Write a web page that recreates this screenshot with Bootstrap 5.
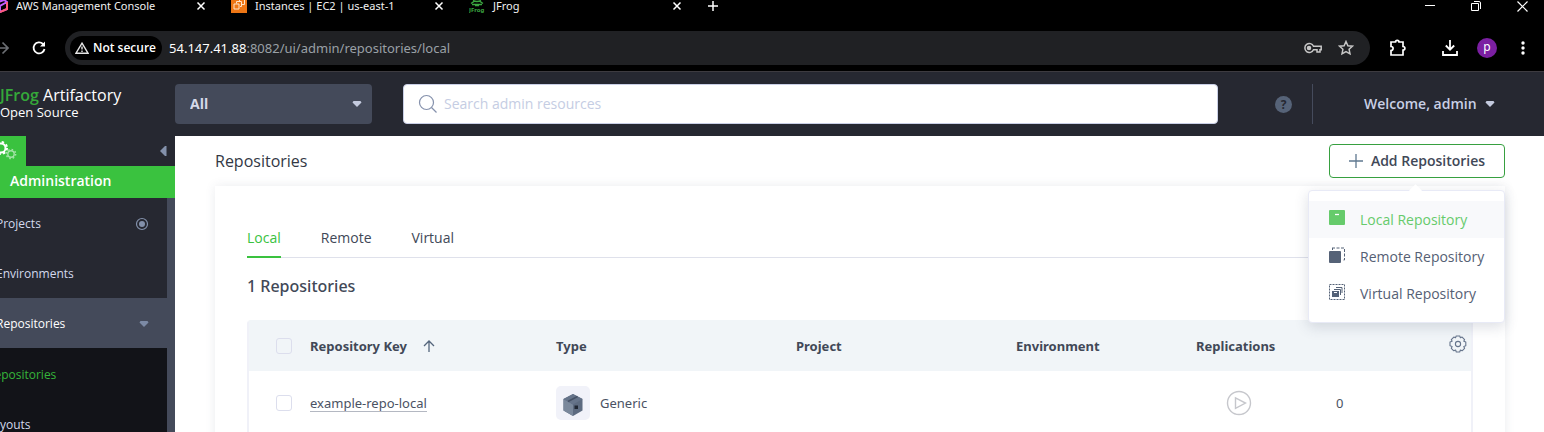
<!DOCTYPE html>
<html lang="en">
<head>
<meta charset="utf-8">
<meta name="viewport" content="width=device-width, initial-scale=1">
<title>JFrog</title>
<link href="https://cdn.jsdelivr.net/npm/bootstrap@5.3.0/dist/css/bootstrap.min.css" rel="stylesheet">
<style>
:root { --ink: #414857; --navy: #262831; --slate: #444a5a; --leaf: #3ac23f; }
body { font-family: "Open Sans", "Noto Sans", sans-serif; font-size: 14px; line-height: 20px; color: var(--ink); background: #fff; height: 100vh; overflow: hidden; }
button { background: none; border: 0; padding: 0; color: inherit; }
svg { display: block; flex: none; }
a { color: inherit; text-decoration: none; }

/* browser chrome */
.chrome { background: #000; color: #f0f0f0; font-family: "Noto Sans", sans-serif; font-size: 11px; border-bottom: 1px solid #3d3b40; }
.strip { height: 31px; padding-bottom: 19px; }
.strip-tab { width: 238px; padding-right: 25px; gap: 8px; }
.strip-tab.first { width: 239px; margin-left: -8px; }
.strip-title { line-height: 16px; }
.window-keys { gap: 36px; padding-right: 16px; }
.tools { padding-bottom: 6px; }
.reload { margin: 0 19px 0 23px; }
.omnibox { background: #202124; border-radius: 17px; height: 34px; padding: 0 16px 0 5px; gap: 7px; font-size: 13px; color: #9aa0a6; }
.omnibox b { color: #fff; font-weight: 400; }
.unsafe { background: #000; color: #fff; border-radius: 12px; height: 24px; padding: 0 6px 0 5px; gap: 4px; font-family: "Open Sans", sans-serif; font-size: 12px; font-weight: 600; }
.extras { gap: 34px; padding: 0 19px 0 19px; }
.extras .me { gap: 24px; margin-left: -16px; }
.avatar { width: 20px; height: 20px; border-radius: 50%; background: #7b1fa2; color: #fff; font-size: 12px; line-height: 18px; }

/* application header */
.app-head { background: var(--navy); height: 64px; color: #c9d0e6; }
.brand { width: 175px; color: #fff; padding-bottom: 4px; }
.brand-name { font-size: 16px; line-height: 20px; }
.brand-name b { color: #35a83a; font-weight: 600; }
.brand-sub { font-size: 13px; line-height: 14px; }
.scope { width: 197px; }
.scope select { appearance: none; width: 100%; height: 40px; border: 0; border-radius: 4px; background: var(--slate); color: #d5d9e8; font-size: 14px; font-weight: 700; padding: 0 15px; }
.over-right { position: absolute; right: 10px; top: 17px; pointer-events: none; }
.finder { height: 40px; background: #fff; border: 1px solid #c9cfe6; border-radius: 4px; padding: 0 14px; margin-left: 31px; }
.finder input { border: 0; outline: 0; background: none; font-size: 14px; color: var(--ink); }
.finder input::placeholder { color: #c5cde3; opacity: 1; }
.account { width: 326px; }
.help { width: 17px; height: 17px; border-radius: 50%; background: #566378; color: var(--navy); font-size: 12px; font-weight: 700; line-height: 17px; margin-right: 20px; }
.account-name { height: 40px; border-left: 1px solid #454b5c; padding-left: 51px; width: 232px; font-weight: 600; }

/* sidebar */
.side { width: 175px; background: var(--navy); color: #d3d9ec; font-size: 12px; }
.side-top { height: 30px; }
.side-chip { width: 26px; height: 30px; background: var(--leaf); }
.side-title { height: 32px; line-height: 30px; background: var(--leaf); color: #fff; font-size: 14px; font-weight: 600; padding-left: 10px; }
.side-list { border-right: 8px solid var(--slate); }
.side-item { height: 50px; padding: 2px 18px 0 0; margin-left: -4px; }
.side-item.opened { background: var(--slate); color: #fff; margin-right: -1px; padding-right: 19px; }
.side-sub { background: #121318; padding-top: 1px; }
.side-sub .side-item { margin-left: -13px; }
.side-sub .chosen { color: #35b53a; }

/* page */
.page { padding: 0 39px 0 40px; min-width: 0; }
.page-bar { height: 50px; }
.page-title { font-size: 16px; line-height: 24px; font-weight: 400; margin: 0; color: #333845; }
.add-btn { height: 34px; width: 176px; border: 1px solid #37a040; border-radius: 4px; background: #fff; font-weight: 600; color: var(--ink); }
.add-menu { position: absolute; right: 0; top: 46px; width: 197px; border: 1px solid #e8eaf6; border-radius: 4px; background: #fff; padding: 10px 0; box-shadow: 0 4px 14px rgba(60,70,100,.18); z-index: 5; }
.add-menu::before { content: ""; position: absolute; left: 102px; top: -5px; width: 9px; height: 9px; background: #fff; transform: rotate(45deg); }
.add-item { display: flex; align-items: center; height: 37px; padding-left: 20px; gap: 14px; color: #556074; }
.add-item.current { background: #f8f9fb; color: #66cb6b; }
.panel { box-shadow: 0 0 10px rgba(60,70,100,.1); padding: 40px 32px 0; min-height: 260px; }
.tab-row { border-bottom: 1px solid #dfe1eb; gap: 40px; }
.tab-row a { padding: 2px 0 8px; border-bottom: 2px solid transparent; margin-bottom: -1px; }
.tab-row a.active { color: var(--leaf); border-color: var(--leaf); }
.count { font: 500 16px/24px "Noto Sans", sans-serif; margin: 16px 0 22px; }
.repos { width: 100%; table-layout: fixed; border: 2px solid #f0f1f8; border-top-color: #f1f5f8; border-collapse: separate; border-spacing: 0; border-radius: 4px 4px 0 0; font-family: "Noto Sans", sans-serif; font-size: 13px; }
.repos thead { background: #f1f5f8; }
.repos th, .repos td { padding: 0; vertical-align: middle; }
.repos th { height: 49px; font-weight: 700; padding-bottom: 2px; }
.repos td { height: 64px; color: #4a5263; }
.col-tick { width: 61px; }
.col-key { width: 246px; }
.col-kind { width: 240px; }
.col-project { width: 220px; }
.col-env { width: 180px; }
.col-run { width: 140px; }
.tick { appearance: none; display: block; width: 16px; height: 16px; border: 1px solid #dcdeed; border-radius: 3px; margin-left: 27px; }
.repo-link { border-bottom: 1px solid #b4b8c2; line-height: 16px; display: inline-block; }
.kind { width: 34px; height: 34px; border-radius: 5px; background: #f1f2f9; margin-right: 10px; }
.run { width: 86px; }
</style>
</head>
<body class="d-flex flex-column">
<header class="chrome flex-shrink-0">
  <div class="strip d-flex align-items-center">
    <div class="strip-tab first d-flex align-items-center">
      <svg width="16" height="16" viewBox="0 0 16 16" fill="none" stroke-width="2"><path d="M3 5l9-3 3 2v7l-7 3-5-3zM8 8v6M8 8l7-4" stroke="#c05cff"/><path d="M8 14l7-3V4" stroke="#ff5a7a"/></svg>
      <span class="strip-title flex-fill">AWS Management Console</span>
      <button aria-label="Close AWS tab"><svg width="10" height="10" viewBox="0 0 10 10" stroke="#fff" stroke-width="1.500"><path d="M1.500 1.500l7 7M8.500 1.500l-7 7"/></svg></button>
    </div>
    <div class="strip-tab d-flex align-items-center">
      <svg width="16" height="16" viewBox="0 0 16 16"><path fill="#ed7615" d="M0 0h16v15H0z"/><path d="M3 6h5v5H3zM5.500 5.500V3.500h5v5H9M8.500 3.500v-2h5v5h-2.500" fill="none" stroke="#ffe3c8"/></svg>
      <span class="strip-title flex-fill">Instances | EC2 | us-east-1</span>
      <button aria-label="Close EC2 tab"><svg width="10" height="10" viewBox="0 0 10 10" stroke="#fff" stroke-width="1.500"><path d="M1.500 1.500l7 7M8.500 1.500l-7 7"/></svg></button>
    </div>
    <div class="strip-tab d-flex align-items-center">
      <svg width="16" height="16" viewBox="0 0 16 16" fill="none" stroke="#3ba640"><path d="M4 2.500q4 2 8 0M2 5.500l3-2M14 5.500l-3-2M3 6.500h10M6 7.500h4" stroke-width="1.500"/><text x="0" y="14" font-size="6" font-weight="700" font-family="Noto Sans, sans-serif" fill="#3ba640" stroke="none">JFrog</text></svg>
      <span class="strip-title flex-fill">JFrog</span>
      <button aria-label="Close JFrog tab"><svg width="10" height="10" viewBox="0 0 10 10" stroke="#fff" stroke-width="1.500"><path d="M1.500 1.500l7 7M8.500 1.500l-7 7"/></svg></button>
    </div>
    <button aria-label="New tab"><svg width="12" height="12" viewBox="0 0 12 12" stroke="#fff" stroke-width="1.500"><path d="M6 1v10M1 6h10"/></svg></button>
    <div class="window-keys ms-auto d-flex align-items-center">
      <button aria-label="Minimize"><svg width="10" height="10" viewBox="0 0 10 10" stroke="#fff"><path d="M0 4.500h10"/></svg></button>
      <button aria-label="Restore"><svg width="10" height="10" viewBox="0 0 10 10" stroke="#fff" fill="none"><path d="M.5 2.500h7v7h-7zM3 .5h5q1.500 0 1.500 1.500v6"/></svg></button>
      <button aria-label="Close window"><svg width="11" height="11" viewBox="0 0 11 11" stroke="#fff" stroke-width="1.200"><path d="M.5.5l10 10M10.500.5l-10 10"/></svg></button>
    </div>
  </div>
  <div class="tools d-flex align-items-center">
    <button aria-label="Forward"><svg width="9" height="14" viewBox="0 0 9 14" fill="none" stroke="#6b6e73" stroke-width="1.700"><path d="M0 7h8M2.500 1.500L8 7l-5.500 5.500"/></svg></button>
    <button class="reload" aria-label="Reload"><svg width="14" height="14" viewBox="0 0 14 14" fill="none" stroke="#fff" stroke-width="1.800"><path d="M12.500 8A5.500 5.500 0 1 1 11 3l1 1"/><path d="M13 .5v5H8z" fill="#fff" stroke="none"/></svg></button>
    <div class="omnibox d-flex align-items-center flex-fill">
      <span class="unsafe d-flex align-items-center"><svg width="14" height="12" viewBox="0 0 14 12" fill="none" stroke="#e6e6e6" stroke-width="1.400"><path d="M7 1.200L13 11.200H1zM7 4.500v3M7 8.500v1.400"/></svg>Not secure</span>
      <span><b>54.147.41.88</b>:8082/ui/admin/repositories/local</span>
      <span class="ms-auto d-flex align-items-center gap-3">
        <svg width="18" height="12" viewBox="0 0 18 12" fill="none" stroke="#c7c7c7" stroke-width="1.500"><path d="M9.500 4.200A4.500 4.500 0 1 0 9.500 7.800H13V10H16V7.800H17.200V4.200z"/><circle cx="5" cy="6" r="1.500" fill="#c7c7c7"/></svg>
        <svg width="16" height="16" viewBox="0 0 16 16" fill="none" stroke="#c7c7c7" stroke-width="1.500"><path d="M8 1.500l1.900 4.200 4.600.5-3.400 3.100.9 4.600-4-2.300-4 2.300.9-4.600L1.500 6.200l4.600-.5z"/></svg>
      </span>
    </div>
    <div class="extras d-flex align-items-center">
      <button aria-label="Extensions"><svg width="18" height="18" viewBox="0 0 18 18" fill="none" stroke="#fff" stroke-width="1.700"><path d="M2 3h4.500C6.500.8 10 .8 10 3h4v4.500c2.500 0 2.500 3.500 0 3.500v5H2v-4.500c2.800 0 2.800-4 0-4z"/></svg></button>
      <button aria-label="Downloads"><svg width="18" height="18" viewBox="0 0 18 18" fill="none" stroke="#fff" stroke-width="1.800"><path d="M9 1v9.500M4.800 6.500L9 10.700l4.200-4.200M2 12v4h14v-4"/></svg></button>
      <div class="me d-flex align-items-center">
        <span class="avatar text-center">p</span>
        <button aria-label="Menu"><svg width="4" height="14" viewBox="0 0 4 14" fill="#fff"><circle cx="2" cy="2" r="1.700"/><circle cx="2" cy="7" r="1.700"/><circle cx="2" cy="12" r="1.700"/></svg></button>
      </div>
    </div>
  </div>
</header>

<header class="app-head d-flex align-items-center flex-shrink-0">
  <div class="brand">
    <div class="brand-name"><b>JFrog</b> Artifactory</div>
    <div class="brand-sub">Open Source</div>
  </div>
  <div class="scope position-relative">
    <select aria-label="Scope"><option>All</option></select>
    <svg class="over-right" width="10" height="6" viewBox="0 0 10 6" fill="#c4cade"><path d="M1.500 0h7l1 1.500L5 6 .5 1.500z"/></svg>
  </div>
  <div class="finder d-flex align-items-center flex-fill">
    <svg width="20" height="20" viewBox="0 0 20 20" fill="none" stroke="#8591ac" stroke-width="1.200"><circle cx="8.500" cy="8.500" r="7"/><path d="M13.500 13.500l5 5"/></svg>
    <input class="flex-fill ms-1" type="text" placeholder="Search admin resources" aria-label="Search admin resources">
  </div>
  <div class="account d-flex align-items-center justify-content-end">
    <button class="help text-center" aria-label="Help">?</button>
    <button class="account-name d-flex align-items-center">Welcome, admin<svg class="ms-2" width="10" height="6" viewBox="0 0 10 6" fill="#c4cade"><path d="M1.500 0h7l1 1.500L5 6 .5 1.500z"/></svg></button>
  </div>
</header>

<div class="d-flex flex-fill">
  <nav class="side d-flex flex-column flex-shrink-0">
    <div class="side-top d-flex justify-content-between align-items-center">
      <div class="side-chip"><svg width="26" height="30" viewBox="0 0 26 30" fill="none"><circle cx="1" cy="12" r="4.500" stroke="#fff" stroke-width="2"/><circle cx="1" cy="12" r="6" stroke="#fff" stroke-width="2" stroke-dasharray="2.400 2.310"/><g stroke="#a5e3a8"><circle cx="11" cy="18" r="3.200" stroke-width="1.400"/><circle cx="11" cy="18" r="4.600" stroke-width="1.500" stroke-dasharray="1.600 2.013"/></g></svg></div>
      <button class="me-2" aria-label="Collapse"><svg width="7" height="10" viewBox="0 0 7 10" fill="#8391ab"><path d="M0 5l5-5h1.500v10H5z"/></svg></button>
    </div>
    <div class="side-title">Administration</div>
    <div class="side-list flex-fill">
      <a href="#" class="side-item d-flex align-items-center justify-content-between">Projects<svg width="14" height="14" viewBox="0 0 14 14" fill="none" stroke="#8391ab"><circle cx="7" cy="7" r="5.500" stroke-width="1.200"/><circle cx="7" cy="7" r="3" fill="#8391ab" stroke="none"/></svg></a>
      <a href="#" class="side-item d-flex align-items-center">Environments</a>
      <a href="#" class="side-item opened d-flex align-items-center justify-content-between">Repositories<svg width="10" height="6" viewBox="0 0 10 6" fill="#7c8aa5"><path d="M1.500 0h7l1 1.500L5 6 .5 1.500z"/></svg></a>
      <div class="side-sub">
        <a href="#" class="side-item chosen d-flex align-items-center">Repositories</a>
        <a href="#" class="side-item d-flex align-items-center">Layouts</a>
      </div>
    </div>
  </nav>

  <main class="page flex-fill">
    <div class="page-bar d-flex align-items-center justify-content-between">
      <h1 class="page-title">Repositories</h1>
      <div class="position-relative">
        <button class="add-btn d-flex align-items-center justify-content-center gap-2" aria-expanded="true"><svg width="14" height="14" viewBox="0 0 14 14" stroke="#5f7890" stroke-width="1.300"><path d="M7 0v14M0 7h14"/></svg>Add Repositories</button>
        <div class="add-menu">
          <a href="#" class="add-item current"><svg width="17" height="20" viewBox="0 0 17 20"><rect x="0" y="0" width="16" height="15" rx="1" fill="#66cb6b"/><path d="M6 4.500h4" stroke="#fff" stroke-width="1.300"/></svg>Local Repository</a>
          <a href="#" class="add-item"><svg width="17" height="20" viewBox="0 0 17 20"><rect x="0" y="4" width="12" height="12" rx="1" fill="#556277"/><path d="M3 1h12.500V13H13M3.500 1V3" fill="none" stroke="#556277" stroke-dasharray="3 1.500"/></svg>Remote Repository</a>
          <a href="#" class="add-item"><svg width="17" height="20" viewBox="0 0 17 20" fill="none" stroke="#556277"><path d="M.5 .5h15v15H.5z" stroke-dasharray="2 1"/><path d="M3 7h7v6H3z" fill="#556277" stroke="none"/><path d="M5 5.500h6.500V11M7 3.500h6V9"/><path d="M5 8.500h3" stroke="#fff"/></svg>Virtual Repository</a>
        </div>
      </div>
    </div>
    <section class="panel">
      <nav class="tab-row d-flex">
        <a href="#" class="active">Local</a><a href="#">Remote</a><a href="#">Virtual</a>
      </nav>
      <h2 class="count">1 Repositories</h2>
      <table class="repos">
        <colgroup><col class="col-tick"><col class="col-key"><col class="col-kind"><col class="col-project"><col class="col-env"><col class="col-run"><col></colgroup>
        <thead><tr>
          <th><input type="checkbox" class="tick" aria-label="Select all"></th>
          <th><span class="d-flex align-items-center gap-3">Repository Key<svg width="12" height="12" viewBox="0 0 12 12" fill="none" stroke="#54657c" stroke-width="1.300"><path d="M6 12V1M1 6l5-5 5 5"/></svg></span></th>
          <th>Type</th><th>Project</th><th>Environment</th><th>Replications</th>
          <th><button class="d-block ms-auto me-1 mb-1" aria-label="Columns"><svg width="18" height="18" viewBox="0 0 18 18" fill="none" stroke="#66758c" stroke-width="1.100"><path d="M7.200 1h3.600l.6 1.800 1.700-.7 2.500 2.500-.8 1.700 2 .8v3.700l-2 .7.8 1.800-2.500 2.500-1.700-.8-.7 2H7.300l-.7-2-1.800.8-2.500-2.500.8-1.800-2.100-.7V7.100l2.100-.8-.8-1.700 2.500-2.500 1.700.7z" stroke-linejoin="round"/><circle cx="9" cy="9" r="2.600"/></svg></button></th>
        </tr></thead>
        <tbody><tr>
          <td><input type="checkbox" class="tick" aria-label="Select example-repo-local"></td>
          <td><a href="#" class="repo-link">example-repo-local</a></td>
          <td><span class="d-flex align-items-center"><span class="kind d-flex align-items-end justify-content-center pb-1"><svg width="20" height="22" viewBox="0 0 20 22"><path d="M10 0l9.500 5v11.500L10 22 .5 16.500V5z" fill="#5d6b80"/><path d="M.5 5L10 10.500V22L.5 16.500z" fill="#7a889b"/><path d="M.5 5L10 0l9.500 5-9.500 5.500z" fill="#66748a"/><path d="M5 7.500l9.500-5" fill="none" stroke="#465266" stroke-width="1.500"/><rect x="11.500" y="11.500" width="3.500" height="3.500" fill="#202733"/></svg></span>Generic</span></td>
          <td></td><td></td>
          <td><span class="run d-flex justify-content-center"><button aria-label="Run replication"><svg width="26" height="26" viewBox="0 0 26 26" fill="none" stroke="#c6c7cc" stroke-width="1.400"><circle cx="13" cy="13" r="11.500"/><path d="M9.500 7.800v10.600l10-5.300z"/></svg></button></span></td>
          <td>0</td>
        </tr></tbody>
      </table>
    </section>
  </main>
</div>
<script src="https://cdn.jsdelivr.net/npm/bootstrap@5.3.0/dist/js/bootstrap.bundle.min.js"></script>
</body>
</html>
